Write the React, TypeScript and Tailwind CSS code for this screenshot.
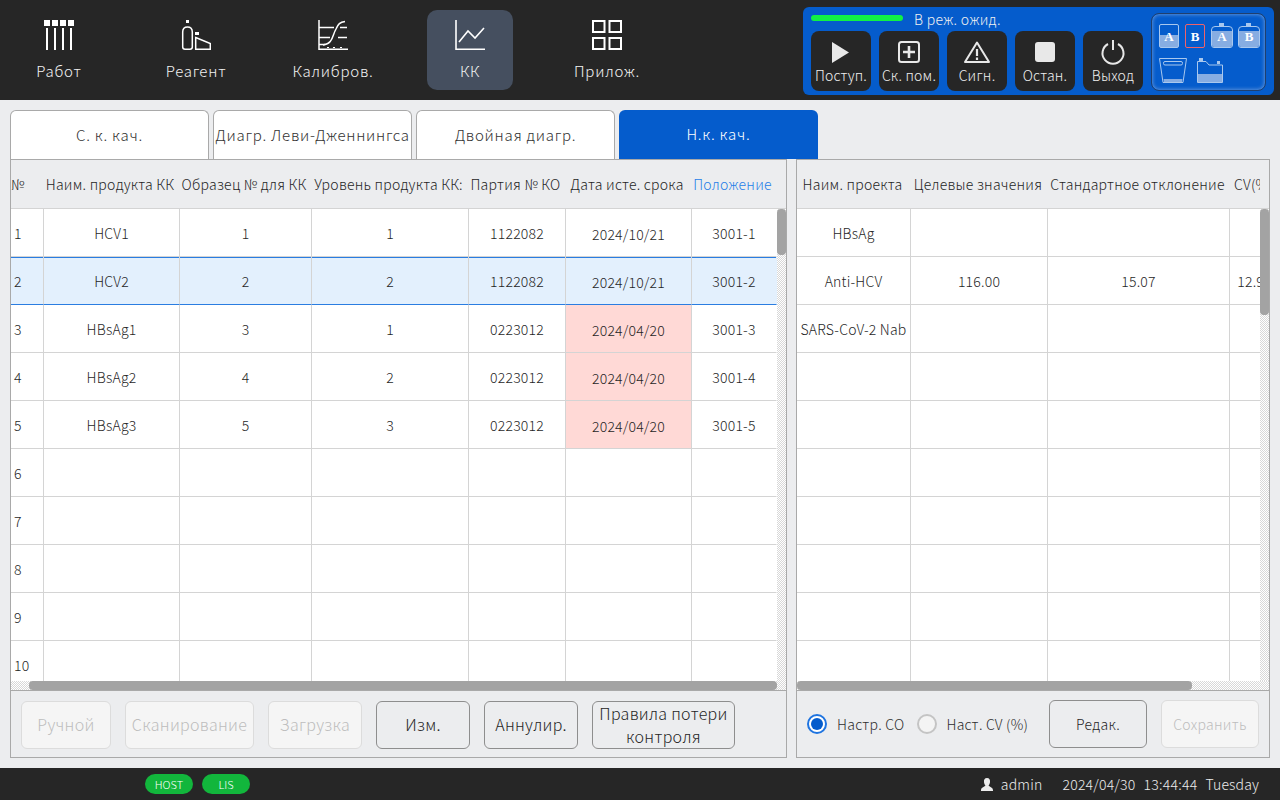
const font = "font-['Noto_Sans_CJK_SC','Noto_Sans',sans-serif]";

function WorkIcon() {
  return (
    <svg width="30" height="30" viewBox="0 0 30 30" fill="#fff" aria-hidden="true">
      <rect x="0" y="0" width="6" height="6" />
      <rect x="8" y="0" width="6" height="6" />
      <rect x="16" y="0" width="6" height="6" />
      <rect x="24" y="0" width="6" height="6" />
      <rect x="2" y="8" width="2" height="22" />
      <rect x="10" y="8" width="2" height="22" />
      <rect x="18" y="8" width="2" height="22" />
      <rect x="26" y="8" width="2" height="22" />
    </svg>
  );
}

function ReagentIcon() {
  return (
    <svg width="30" height="30" viewBox="0 0 30 30" fill="none" stroke="#fff" strokeWidth="1.5" aria-hidden="true">
      <rect x="5" y="0" width="3" height="3" fill="#fff" stroke="none" />
      <path d="M6.5 7 C3 7 1.7 9 1.7 12 V27 Q1.7 29.2 4 29.2 H9 Q11.3 29.2 11.3 27 V12 C11.3 9 10 7 6.5 7 Z" />
      <rect x="14" y="12" width="4" height="3" fill="#fff" stroke="none" />
      <path d="M14.7 17.5 L29.3 23.5 V29.3 H14.7 Z" />
    </svg>
  );
}

function CalibIcon() {
  return (
    <svg width="30" height="30" viewBox="0 0 30 30" fill="none" stroke="#fff" strokeWidth="1.5" aria-hidden="true">
      <path d="M1 0 V29.2 H30" />
      <path d="M1 7.5 H16 M22 7.5 H29 M1 17.5 H12 M20 17.5 H29 M1 24.5 H7" />
      <path d="M5 25 C15 24 14 16 18 9 C20 4 22 2 27 1.5" />
      <path d="M9 27.5 H11 M15 27.5 H17 M22 27.5 H24" strokeWidth="1" />
    </svg>
  );
}

function QcIcon() {
  return (
    <svg width="30" height="30" viewBox="0 0 30 30" fill="none" stroke="#fff" strokeWidth="1.6" aria-hidden="true">
      <path d="M1 0 V29.2 H30" />
      <path d="M4 22 L13 11 L20 18 L29 8" />
    </svg>
  );
}

function AppsIcon() {
  return (
    <svg width="30" height="30" viewBox="0 0 30 30" fill="none" stroke="#fff" strokeWidth="2" aria-hidden="true">
      <rect x="1" y="1" width="11.5" height="11" />
      <rect x="17.5" y="1" width="11.5" height="11" />
      <rect x="1" y="18" width="11.5" height="11" />
      <rect x="17.5" y="18" width="11.5" height="11" />
    </svg>
  );
}

const navItems = [
  { label: 'Работ', icon: <WorkIcon /> },
  { label: 'Реагент', icon: <ReagentIcon /> },
  { label: 'Калибров.', icon: <CalibIcon /> },
  { label: 'КК', icon: <QcIcon />, active: true },
  { label: 'Прилож.', icon: <AppsIcon /> },
];

const actions = [
  {
    label: 'Поступ.',
    icon: <path d="M2 1 L19 11.5 L2 22 Z" fill="#e8e8e8" />,
  },
  {
    label: 'Ск. пом.',
    icon: (
      <g>
        <rect x="1" y="1" width="20" height="20" rx="2.5" fill="none" stroke="#e8e8e8" strokeWidth="2" />
        <path d="M11 5 V17 M5 11 H17" stroke="#e8e8e8" strokeWidth="2.6" />
      </g>
    ),
  },
  {
    label: 'Сигн.',
    icon: (
      <g transform="translate(-2 0)">
        <path d="M13 1.5 L25 21 H1 Z" fill="none" stroke="#e8e8e8" strokeWidth="2" strokeLinejoin="round" />
        <path d="M13 8 V15 M13 16.5 V19" stroke="#e8e8e8" strokeWidth="2.2" />
      </g>
    ),
  },
  {
    label: 'Остан.',
    icon: <rect x="1" y="1" width="20" height="20" rx="3" fill="#e8e8e8" />,
  },
  {
    label: 'Выход',
    icon: (
      <g fill="none" stroke="#e8e8e8" strokeWidth="2">
        <path d="M6 3 A10.5 10.5 0 1 0 16 3" />
        <path d="M11 -1 V9" />
      </g>
    ),
  },
];

function Cartridge({ letter, red }: { letter: string; red?: boolean }) {
  return (
    <svg width="20" height="24" viewBox="0 0 20 24">
      {!red && <rect x="1" y="11" width="18" height="12" fill="#87ade2" />}
      <rect x="0.5" y="0.5" width="19" height="23" rx="1.5" fill="none" stroke={red ? '#f0626a' : '#a9c8ee'} />
      <text x="10" y="17" textAnchor="middle" fontSize="13" fontWeight="700" fill="#fff" fontFamily="Liberation Serif, serif">
        {letter}
      </text>
    </svg>
  );
}

function Bottle({ letter }: { letter: string }) {
  return (
    <svg width="22" height="25" viewBox="0 0 22 25">
      <rect x="8" y="0" width="5" height="4" fill="#a9c8ee" />
      <path d="M4 3.5 H18 Q21.5 3.5 21.5 7 V22 Q21.5 24.5 19 24.5 H3 Q0.5 24.5 0.5 22 V7 Q0.5 3.5 4 3.5 Z" fill="none" stroke="#a9c8ee" />
      <path d="M1 8 H21 V22 Q21 24 19 24 H3 Q1 24 1 22 Z" fill="#87ade2" />
      <text x="11" y="18" textAnchor="middle" fontSize="13" fontWeight="700" fill="#fff" fontFamily="Liberation Serif, serif">
        {letter}
      </text>
    </svg>
  );
}

function WasteBin() {
  return (
    <svg width="28" height="25" viewBox="0 0 28 25" fill="none" stroke="#a9c8ee" aria-hidden="true">
      <path d="M0.5 0.5 H27.5 L24 24.5 H4 Z" />
      <rect x="4.5" y="3.5" width="19" height="3.5" rx="1.5" />
      <path d="M4.5 21 H23.5 L23 24 H5 Z" fill="#87ade2" stroke="none" />
    </svg>
  );
}

function WasteTank() {
  return (
    <svg width="26" height="25" viewBox="0 0 26 25" fill="none" stroke="#a9c8ee" aria-hidden="true">
      <rect x="2" y="0" width="4" height="3" fill="#a9c8ee" stroke="none" />
      <rect x="20" y="3" width="3" height="3" fill="#a9c8ee" stroke="none" />
      <path d="M0.5 24.5 V3.5 H9 L12 7 H25.5 V24.5 Z" />
      <rect x="1" y="16" width="24" height="8" fill="#87ade2" stroke="none" />
    </svg>
  );
}

function TopBar() {
  return (
    <header className="h-[100px] shrink-0 bg-[#262626] flex">
      <nav className="flex gap-[51px] pl-4 pt-[10px]">
        {navItems.map((item) => (
          <div
            key={item.label}
            className={`w-[86px] h-[80px] rounded-[10px] flex flex-col items-center pt-[10px] ${item.active ? 'bg-[#454f5f]' : ''}`}
          >
            {item.icon}
            <span className="mt-[11px] text-[15px] leading-[20px] font-light whitespace-nowrap text-[#f2f2f2] tracking-[0.75px]">{item.label}</span>
          </div>
        ))}
      </nav>
      <div className="ml-auto mr-[6px] mt-[7px] w-[471px] h-[88px] bg-[#055ccc] rounded-[6px] flex pl-2">
        <div className="w-[341px]">
          <div className="h-6 flex items-center">
            <div className="w-[92px] h-[6px] mt-[-2px] rounded-full bg-[#11f244]" />
            <span className="ml-[11px] text-sm font-light text-[#f0f0f0] tracking-[0.3px]">В реж. ожид.</span>
          </div>
          <div className="flex gap-2">
            {actions.map((a) => (
              <button key={a.label} className="w-[60px] h-[60px] rounded-lg bg-[#262626] flex flex-col items-center pt-[10px]">
                <svg width="22" height="22" viewBox="0 0 22 22" className="overflow-visible shrink-0" aria-hidden="true">
                  {a.icon}
                </svg>
                <span className="mt-[2px] text-sm leading-[20px] font-light whitespace-nowrap text-[#f0f0f0] tracking-[0.2px]">{a.label}</span>
              </button>
            ))}
          </div>
        </div>
        <div className="ml-[-1px] mt-[6px] w-[115px] h-[78px] rounded-lg border border-[#1f3f6e] shadow-[inset_0_0_4px_#7fa8e0] pl-[7px] pt-[9px]">
          <div className="flex items-end">
            <Cartridge letter="A" />
            <div className="ml-[6px]"><Cartridge letter="B" red /></div>
            <div className="ml-[6px]"><Bottle letter="A" /></div>
            <div className="ml-[5px]"><Bottle letter="B" /></div>
          </div>
          <div className="flex mt-[10px]">
            <WasteBin />
            <div className="ml-[10px]"><WasteTank /></div>
          </div>
        </div>
      </div>
    </header>
  );
}

const leftCols = ['w-[33px]', 'w-[136px]', 'w-[132px]', 'w-[157px]', 'w-[97px]', 'w-[126px]', 'w-[85px]'];
const rightCols = ['w-[114px]', 'w-[137px]', 'w-[182px]', 'w-[50px]'];

const leftHead = ['№', 'Наим. продукта КК', 'Образец № для КК', 'Уровень продукта КК:', 'Партия № КО', 'Дата исте. срока', 'Положение'];
const rightHead = ['Наим. проекта', 'Целевые значения', 'Стандартное отклонение', 'CV(%)'];

const qcRows = [
  ['1', 'HCV1', '1', '1', '1122082', '2024/10/21', '3001-1'],
  ['2', 'HCV2', '2', '2', '1122082', '2024/10/21', '3001-2'],
  ['3', 'HBsAg1', '3', '1', '0223012', '2024/04/20', '3001-3'],
  ['4', 'HBsAg2', '4', '2', '0223012', '2024/04/20', '3001-4'],
  ['5', 'HBsAg3', '5', '3', '0223012', '2024/04/20', '3001-5'],
  ['6', '', '', '', '', '', ''],
  ['7', '', '', '', '', '', ''],
  ['8', '', '', '', '', '', ''],
  ['9', '', '', '', '', '', ''],
  ['10', '', '', '', '', '', ''],
];

const projectRows = [
  ['HBsAg', '', '', ''],
  ['Anti-HCV', '116.00', '15.07', '12.99'],
  ['SARS-CoV-2 Nab', '', '', ''],
  ['', '', '', ''],
  ['', '', '', ''],
  ['', '', '', ''],
  ['', '', '', ''],
  ['', '', '', ''],
  ['', '', '', ''],
  ['', '', '', ''],
];

const track = 'bg-[repeating-conic-gradient(#d8d8d8_0_25%,#ffffff_0_50%)] bg-[length:2px_2px]';

function Colgroup({ cols }: { cols: string[] }) {
  return (
    <colgroup>
      {cols.map((c) => (
        <col key={c} className={c} />
      ))}
    </colgroup>
  );
}

function LeftPanel() {
  return (
    <section className="w-[777px] h-full border border-[#a9a9a9] flex flex-col">
      <div className="h-[49px] shrink-0 border-b border-[#d4d4d4] overflow-hidden">
        <table className="table-fixed border-separate border-spacing-0 w-[766px]">
          <Colgroup cols={leftCols} />
          <thead>
            <tr>
              {leftHead.map((h, i) => (
                <th
                  key={h}
                  scope="col"
                  className={`h-[48px] p-0 text-[14px] font-light tracking-[0.25px] whitespace-nowrap ${i === 0 ? 'text-left' : 'text-center pr-1'} ${i === 6 ? 'text-[#1f7ee8]' : 'text-[#1f1f1f]'}`}
                >
                  {h}
                </th>
              ))}
            </tr>
          </thead>
        </table>
      </div>
      <div className="flex h-[472px] shrink-0">
        <div className="w-[766px] overflow-hidden bg-white">
          <table className="table-fixed border-separate border-spacing-0 w-[766px]">
            <Colgroup cols={leftCols} />
            <tbody>
              {qcRows.map((row, r) => (
                <tr key={row[0]}>
                  {row.map((cell, c) => {
                    const selected = r === 1;
                    const expired = c === 5 && r >= 2 && r <= 4;
                    return (
                      <td
                        key={c}
                        className={`h-[48px] p-0 text-[14px] font-light text-[#1f1f1f] tracking-[0.2px] border-b border-r ${
                          c === 0 ? 'text-left pl-[3px]' : 'text-center'
                        } ${c === 5 ? 'pt-1' : 'pt-[2px]'} ${selected ? 'bg-[#e3f0fd] border-b-[#2a7de1] shadow-[inset_0_1px_0_#2a7de1]' : 'border-b-[#d4d4d4]'} ${
                          expired ? 'bg-[#ffd9d6]' : ''
                        } ${c === 6 ? 'border-r-transparent' : 'border-r-[#d4d4d4]'}`}
                      >
                        {cell}
                      </td>
                    );
                  })}
                </tr>
              ))}
            </tbody>
          </table>
        </div>
        <div className={`w-[9px] ${track}`}>
          <div className="h-[46px] rounded-[4px] bg-[#a3a3a3]" />
        </div>
      </div>
      <div className={`h-[9px] shrink-0 flex ${track}`}>
        <div className="ml-[18px] w-[748px] rounded-[4px] bg-[#a3a3a3]" />
      </div>
      <div className="flex-1 border-t border-[#a9a9a9] flex gap-[14px] pl-[10px] pt-[10px]">
        <FooterButton label="Ручной" width="w-[90px]" disabled />
        <FooterButton label="Сканирование" width="w-[129px]" disabled />
        <FooterButton label="Загрузка" width="w-[94px]" disabled />
        <FooterButton label="Изм." width="w-[94px]" />
        <FooterButton label="Аннулир." width="w-[94px]" />
        <FooterButton label="Правила потери контроля" width="w-[143px]" pad="pb-1" />
      </div>
    </section>
  );
}

function FooterButton({ label, width, disabled, small, pad = 'pb-[2px]' }: { label: string; width: string; disabled?: boolean; small?: boolean; pad?: string }) {
  return (
    <button
      className={`${width} ${pad} h-[48px] rounded-md border px-1 leading-[23px] tracking-[0.3px] ${small ? 'text-[14px]' : 'text-[16px]'} font-light ${
        disabled ? 'bg-[#f5f5f5] border-[#dcdcdc] text-[#bdbdbd]' : 'bg-[#ecedef] border-[#8e8e8e] text-[#262626]'
      }`}
    >
      {label}
    </button>
  );
}

function RightPanel() {
  return (
    <section className="w-[474px] h-full border border-[#a9a9a9] flex flex-col">
      <div className="h-[49px] shrink-0 border-b border-[#d4d4d4] overflow-hidden">
        <div className="w-[463px] overflow-hidden">
          <table className="table-fixed border-separate border-spacing-0 w-[483px]">
            <Colgroup cols={rightCols} />
            <thead>
              <tr>
                {rightHead.map((h) => (
                  <th key={h} scope="col" className="h-[48px] p-0 pr-[3px] text-[14px] font-light tracking-[0.25px] text-center whitespace-nowrap text-[#1f1f1f]">
                    {h}
                  </th>
                ))}
              </tr>
            </thead>
          </table>
        </div>
      </div>
      <div className="flex h-[472px] shrink-0">
        <div className="w-[463px] overflow-hidden bg-white">
          <table className="table-fixed border-separate border-spacing-0 w-[483px]">
            <Colgroup cols={rightCols} />
            <tbody>
              {projectRows.map((row, r) => (
                <tr key={r}>
                  {row.map((cell, c) => (
                    <td
                      key={c}
                      className="h-[48px] p-0 pt-[2px] text-[14px] font-light text-center whitespace-nowrap text-[#1f1f1f] tracking-[0.2px] border-b border-r border-[#d4d4d4]"
                    >
                      {cell}
                    </td>
                  ))}
                </tr>
              ))}
            </tbody>
          </table>
        </div>
        <div className={`w-[9px] ${track}`}>
          <div className="h-[106px] rounded-[4px] bg-[#a3a3a3]" />
        </div>
      </div>
      <div className={`h-[9px] shrink-0 flex ${track}`}>
        <div className="w-[395px] rounded-[4px] bg-[#a3a3a3]" />
      </div>
      <div className="flex-1 border-t border-[#a9a9a9] flex items-start pl-[10px] pt-[9px]">
        <label className="flex items-center h-[48px] text-[14px] font-light text-[#2e2e2e] tracking-[0.3px]">
          <span className="w-5 h-5 rounded-full border-2 border-[#1f74e0] bg-white flex items-center justify-center mr-[10px]">
            <span className="w-3 h-3 rounded-full bg-[#055ccc]" />
          </span>
          Настр. CO
        </label>
        <label className="flex items-center h-[48px] ml-3 text-[14px] font-light text-[#2e2e2e] tracking-[0.2px]">
          <span className="w-5 h-5 rounded-full border-2 border-[#c4c4c4] bg-[#f4f4f4] mr-[10px]" />
          Наст. CV (%)
        </label>
        <div className="ml-auto mr-[10px] flex gap-[14px]">
          <FooterButton label="Редак." width="w-[98px]" small pad="pb-0" />
          <FooterButton label="Сохранить" width="w-[98px]" disabled small pad="pb-0" />
        </div>
      </div>
    </section>
  );
}

const tabs = ['С. к. кач.', 'Диагр. Леви-Дженнингса', 'Двойная диагр.', 'Н.к. кач.'];

export default function App() {
  return (
    <div className={`w-screen h-screen overflow-hidden flex flex-col bg-[#ecedef] ${font}`}>
      <TopBar />
      <main className="flex-1 min-h-0 px-[10px] pt-[10px] flex flex-col">
        <div className="flex gap-1 h-[49px] shrink-0">
          {tabs.map((t, i) => (
            <div
              key={t}
              className={`w-[199px] rounded-t-[6px] flex items-center justify-center text-[15px] font-light tracking-[0.75px] whitespace-nowrap ${
                i === 3 ? 'bg-[#055ccc] text-white' : 'bg-white border border-b-0 border-[#a9a9a9] text-[#333333]'
              }`}
            >
              {t}
            </div>
          ))}
        </div>
        <div className="flex gap-[9px] h-[599px] shrink-0">
          <LeftPanel />
          <RightPanel />
        </div>
      </main>
      <footer className="h-[32px] shrink-0 bg-[#262626] flex items-center pl-[145px] pr-[21px] text-[#ececec]">
        <span className="w-12 h-5 rounded-full bg-[#12b63c] flex items-center justify-center text-[11px] font-light text-white">HOST</span>
        <span className="ml-[9px] w-12 h-5 rounded-full bg-[#12b63c] flex items-center justify-center text-[11px] font-light text-white">LIS</span>
        <svg className="ml-auto" width="12" height="13" viewBox="0 0 12 13" fill="#ececec" aria-hidden="true">
          <path d="M6 0 C8.4 0 9.3 2 9 4.2 C8.8 5.6 8.1 7 7.6 7.6 C8 8.8 12 9.4 12 12.2 V13 H0 V12.2 C0 9.4 4 8.8 4.4 7.6 C3.9 7 3.2 5.6 3 4.2 C2.7 2 3.6 0 6 0 Z" />
        </svg>
        <span className="ml-2 text-[14px] font-light tracking-[0.2px]">admin</span>
        <span className="ml-5 text-[14px] font-light tracking-[0.2px]">2024/04/30</span>
        <span className="ml-2 text-[14px] font-light tracking-[0.25px]">13:44:44</span>
        <span className="ml-2 text-[14px] font-light tracking-[0.15px]">Tuesday</span>
      </footer>
    </div>
  );
}
